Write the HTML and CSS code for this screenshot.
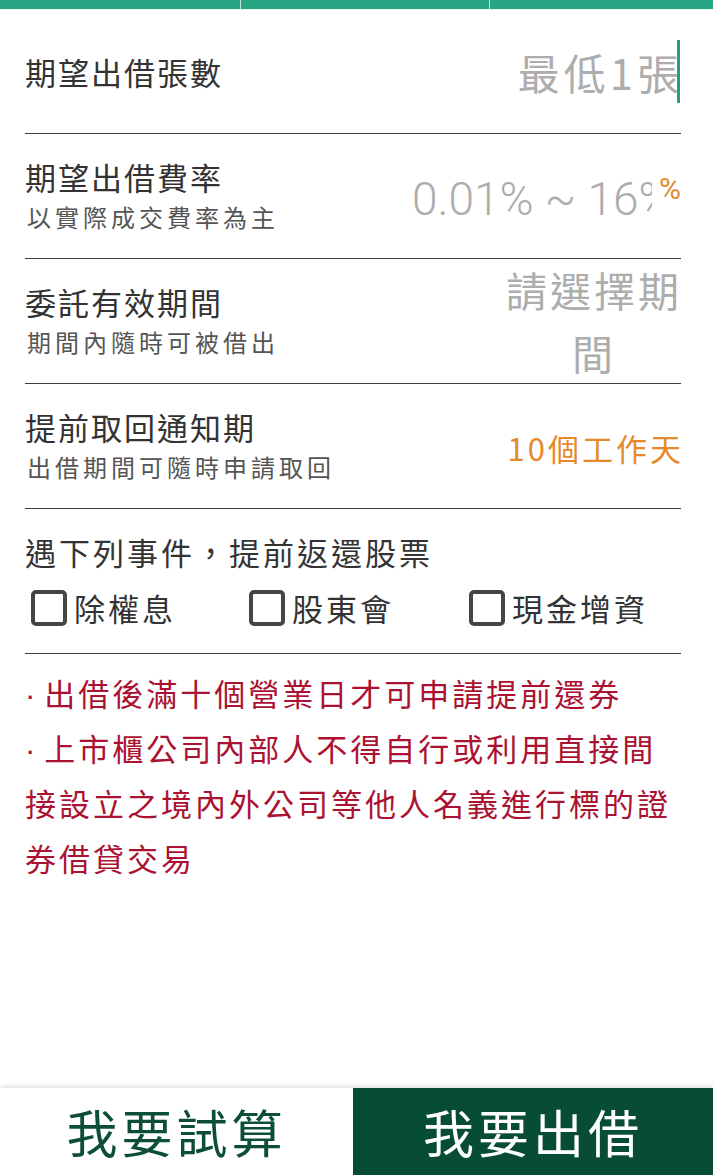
FILE: index.html
```html
<!DOCTYPE html>
<html lang="zh-Hant">
<head>
<meta charset="utf-8">
<title>出借</title>
<link rel="stylesheet" href="styles.css">
</head>
<body>
<div class="page">
  <div class="tabbar">
    <div class="tab"></div>
    <div class="tab"></div>
    <div class="tab"></div>
  </div>
  <main class="form">
    <div class="row">
      <div class="label">
        <div class="title">期望出借張數</div>
      </div>
      <div class="value placeholder qty">最低1張<span class="caret"></span></div>
    </div>
    <div class="row">
      <div class="label">
        <div class="title">期望出借費率</div>
        <div class="sub">以實際成交費率為主</div>
      </div>
      <div class="rate">
        <div class="rate-box">0.01% ~ 16%</div>
        <div class="pct">%</div>
      </div>
    </div>
    <div class="row">
      <div class="label">
        <div class="title">委託有效期間</div>
        <div class="sub">期間內隨時可被借出</div>
      </div>
      <div class="value placeholder period">請選擇期間</div>
    </div>
    <div class="row">
      <div class="label">
        <div class="title">提前取回通知期</div>
        <div class="sub">出借期間可隨時申請取回</div>
      </div>
      <div class="value notice">10個工作天</div>
    </div>
    <div class="events">
      <div class="events-title">遇下列事件，提前返還股票</div>
      <div class="checks">
        <label class="check"><span class="box"></span>除權息</label>
        <label class="check"><span class="box"></span>股東會</label>
        <label class="check"><span class="box"></span>現金增資</label>
      </div>
    </div>
    <div class="notes">
      <p><span class="dot">·</span>出借後滿十個營業日才可申請提前還券</p>
      <p><span class="dot">·</span>上市櫃公司內部人不得自行或利用直接間接設立之境內外公司等他人名義進行標的證券借貸交易</p>
    </div>
  </main>
  <footer class="actions">
    <button class="btn btn-calc">我要試算</button>
    <button class="btn btn-lend">我要出借</button>
  </footer>
</div>
</body>
</html>
```
FILE: styles.css
```css
html, body {
  margin: 0;
  padding: 0;
  background: #ffffff;
}
body {
  font-family: "Noto Sans CJK TC", "Noto Sans", sans-serif;
  color: #333333;
}
.page {
  width: 713px;
  height: 1175px;
  display: flex;
  flex-direction: column;
  overflow: hidden;
}
.tabbar {
  height: 9px;
  display: grid;
  grid-template-columns: 241px 249px 1fr;
  background: #27a683;
  border-bottom: 1px solid #e3f4ef;
  flex: none;
}
.tab {
  border-right: 1px solid rgba(255,255,255,0.7);
}
.tab:last-child { border-right: none; }

.form {
  flex: 1;
  padding: 0 32px 0 25px;
}
.row {
  box-sizing: border-box;
  height: 125px;
  border-bottom: 1px solid #3d3d3d;
  display: flex;
  align-items: center;
  justify-content: space-between;
}
.row:first-child { height: 124px; }
.title {
  font-size: 31px;
  line-height: 42px;
  letter-spacing: 2px;
  color: #333333;
}
.sub {
  font-size: 24px;
  line-height: 38px;
  letter-spacing: 4px;
  color: #555555;
  padding-left: 2px;
}
.placeholder { color: #adadad; }
.qty {
  font-size: 42px;
  letter-spacing: 4px;
  display: flex;
  align-items: center;
  margin-right: 1px;
}
.caret {
  display: inline-block;
  width: 3px;
  height: 63px;
  background: #2a9d80;
  margin-left: -6px;
}
.rate {
  display: flex;
  align-items: flex-start;
  align-self: stretch;
  padding-top: 39px;
}
.rate-box {
  width: 240px;
  overflow: hidden;
  white-space: nowrap;
  font-family: "Roboto", "Liberation Sans", sans-serif;
  font-weight: 300;
  font-size: 46px;
  line-height: 52px;
  color: #adadad;
}
.pct {
  font-family: "Roboto", "Liberation Sans", sans-serif;
  font-size: 30px;
  line-height: 30px;
  color: #e0892c;
  margin-left: 7px;
  margin-top: 1px;
}
.period {
  width: 178px;
  font-size: 41px;
  line-height: 63px;
  letter-spacing: 3px;
  text-align: center;
  margin-right: -2px;
}
.notice {
  font-size: 31px;
  letter-spacing: 3px;
  color: #e5892b;
  margin-right: -3px;
  margin-bottom: -2px;
}

.events {
  padding: 20px 0 22px;
  border-bottom: 1px solid #3d3d3d;
}
.events-title {
  font-size: 31px;
  line-height: 46px;
  letter-spacing: 3px;
  color: #333333;
}
.checks {
  margin-top: 10px;
  padding-left: 6px;
  display: grid;
  grid-template-columns: 218px 220px 1fr;
}
.check {
  display: flex;
  align-items: center;
  font-size: 31px;
  line-height: 46px;
  letter-spacing: 3px;
  color: #333333;
}
.box {
  box-sizing: border-box;
  width: 36px;
  height: 36px;
  border: 4px solid #454545;
  border-radius: 5px;
  margin-right: 7px;
  flex: none;
}

.notes {
  padding-top: 11px;
  color: #ab1231;
}
.notes p {
  margin: 0;
  font-size: 31px;
  line-height: 55px;
  letter-spacing: 3px;
}
.dot {
  font-family: "Liberation Sans", sans-serif;
  line-height: 0;
  letter-spacing: 0;
  margin-right: 9px;
}

.actions {
  flex: none;
  height: 87px;
  display: grid;
  grid-template-columns: 353px 1fr;
  box-shadow: 0 -2px 4px rgba(0,0,0,0.12);
}
.btn {
  border: none;
  margin: 0;
  padding: 0;
  font-family: "Noto Sans CJK TC", "Noto Sans", sans-serif;
  font-size: 51px;
  letter-spacing: 4px;
  line-height: 87px;
  text-align: center;
}
.btn-calc {
  background: #ffffff;
  color: #0c4e36;
}
.btn-lend {
  background: #064d33;
  color: #ffffff;
}
```
